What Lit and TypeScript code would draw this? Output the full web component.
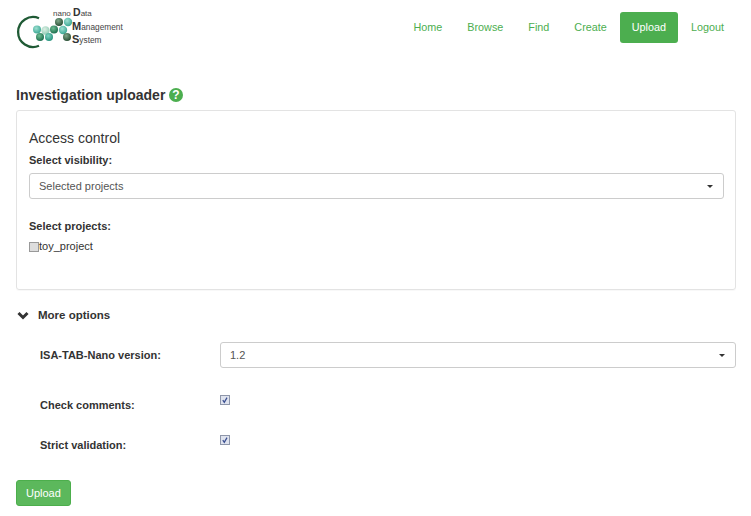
import { LitElement, html, css, svg } from "lit";
import { customElement } from "lit/decorators.js";

const spheres: [number, number, number, string][] = [
  [59, 22, 4, "g"], [68, 22, 4.2, "t"], [37, 29.5, 4, "t"], [45.5, 30.5, 4.2, "p"],
  [54, 29.5, 4, "g2"], [63, 30, 4.2, "t"], [40, 37, 4, "g2"], [49, 37, 4, "t2"],
  [67, 37, 4, "g"],
];

const grads: [string, string, string][] = [
  ["g", "#7fa88a", "#24492f"],
  ["g2", "#6fbd92", "#17694a"],
  ["t", "#9fe0d2", "#36a590"],
  ["t2", "#7fd4c2", "#23907a"],
  ["p", "#dcefe4", "#8ccab2"],
];

@customElement("app-root")
export class AppRoot extends LitElement {
  static styles = css`
    :host { display: block; font-family: "Liberation Sans", Arial, sans-serif; font-size: 11px; color: #333; background: #fff; height: 516px; overflow: hidden; }
    .header { display: flex; justify-content: space-between; align-items: flex-start; padding: 5px 15px 0 16px; height: 86px; box-sizing: border-box; }
    .logo { display: block; }
    .logo text { font-family: "Liberation Sans", Arial, sans-serif; fill: #444; }
    nav { display: flex; gap: 1px; margin-top: 7px; }
    nav a { color: #4cae4f; font-size: 10.8px; line-height: 31px; height: 31px; padding: 0 12px; border-radius: 3px; }
    nav a.active { background: #4cae4f; color: #fff; }
    h1 { margin: 0 16px; font-size: 14px; line-height: 18px; font-weight: bold; color: #333; display: flex; align-items: center; gap: 4px; height: 18px; }
    .help { display: block; }
    .card { margin: 6px 15px 0 16px; border: 1px solid #e3e3e3; border-radius: 3px; padding: 20px 11px 0 12px; height: 180px; box-sizing: border-box; box-shadow: 0 1px 1px rgba(0,0,0,.03); }
    h2 { margin: 0; font-size: 14px; line-height: 15px; font-weight: normal; color: #333; }
    label.t { display: block; font-weight: bold; font-size: 11px; line-height: 13px; color: #333; }
    .card label.t { margin-top: 8px; }
    .select { display: flex; align-items: center; justify-content: space-between; height: 26px; box-sizing: border-box; border: 1px solid #ccc; border-radius: 3px; padding: 0 10px 0 9px; font-size: 11px; color: #555; background: #fff; }
    .select i { width: 0; height: 0; border-left: 3px solid transparent; border-right: 3px solid transparent; border-top: 3px solid #333; }
    .card .select { margin-top: 6px; }
    .card label.second { margin-top: 21px; }
    .proj { display: flex; align-items: center; margin-top: 7px; line-height: 13px; }
    .box { width: 10px; height: 10px; box-sizing: border-box; display: block; flex: none; }
    .more { display: flex; align-items: center; margin: 18px 0 0 17px; height: 14px; font-weight: bold; font-size: 11.5px; color: #333; }
    .more svg { display: block; margin-right: 9px; }
    .row { display: grid; grid-template-columns: 180px 1fr; margin: 0 15px 0 40px; }
    .r1 { margin-top: 20px; align-items: center; }
    .r2 { margin-top: 27px; height: 26px; }
    .r3 { margin-top: 14px; height: 26px; }
    .r2 label.t, .r3 label.t { margin-top: 4px; }
    .btn { display: inline-block; margin: 19px 0 0 16px; background: #5cb85c; border: 1px solid #4cae4c; color: #fff; border-radius: 3px; font-size: 11px; line-height: 24px; height: 26px; box-sizing: border-box; padding: 0 9px; }
  `;

  private check() {
    return html`<svg class="box" viewBox="0 0 10 10"><rect x=".5" y=".5" width="9" height="9" fill="#dfe3ee" stroke="#8e96aa"/><path d="M2.8 5.2 4.3 7.3 7 2.6" fill="none" stroke="#3b4f91" stroke-width="1.3"/></svg>`;
  }

  render() {
    return html`
      <div class="header">
        <svg class="logo" width="112" height="45" viewBox="0 -3 112 45">
          <defs>
            ${grads.map(([id, a, b]) => svg`<radialGradient id=${id} cx=".4" cy=".35" r=".7"><stop offset="0" stop-color=${a}/><stop offset="1" stop-color=${b}/></radialGradient>`)}
          </defs>
          <path d="M23 10.2A15 15 0 1 0 23 37.8" fill="none" stroke="#1f5a35" stroke-width="2.3"/>
          ${spheres.map(([x, y, r, g]) => svg`<circle cx=${x - 16} cy=${y - 8} r=${r} fill="url(#${g})"/>`)}
          <text x="37" y="8" font-size="8">nano <tspan font-size="10.5" font-weight="bold" fill="#333">D</tspan>ata</text>
          <text x="56" y="21.5" font-size="8.3"><tspan font-size="11" font-weight="bold" fill="#333">M</tspan>anagement</text>
          <text x="56" y="35" font-size="8.3"><tspan font-size="11" font-weight="bold" fill="#333">S</tspan>ystem</text>
        </svg>
        <nav>
          <a>Home</a><a>Browse</a><a>Find</a><a>Create</a><a class="active">Upload</a><a>Logout</a>
        </nav>
      </div>
      <h1>Investigation uploader
        <svg class="help" width="14" height="14" viewBox="0 0 14 14"><circle cx="7" cy="7" r="7" fill="#4cae4f"/><text x="7" y="11.2" text-anchor="middle" font-size="12" font-weight="bold" fill="#fff" font-family="Liberation Sans">?</text></svg>
      </h1>
      <div class="card">
        <h2>Access control</h2>
        <label class="t">Select visibility:</label>
        <div class="select"><span>Selected projects</span><i></i></div>
        <label class="t second">Select projects:</label>
        <div class="proj">
          <svg class="box" viewBox="0 0 10 10"><rect x=".5" y=".5" width="9" height="9" fill="#ddd" stroke="#999"/></svg>
          <span>toy_project</span>
        </div>
      </div>
      <div class="more">
        <svg width="12" height="9" viewBox="0 0 12 9"><path d="M1.5 2 6 6.5 10.5 2" fill="none" stroke="#333" stroke-width="3"/></svg>
        More options
      </div>
      <div class="row r1"><label class="t">ISA-TAB-Nano version:</label><div class="select"><span>1.2</span><i></i></div></div>
      <div class="row r2"><label class="t">Check comments:</label><div>${this.check()}</div></div>
      <div class="row r3"><label class="t">Strict validation:</label><div>${this.check()}</div></div>
      <a class="btn">Upload</a>
    `;
  }
}
